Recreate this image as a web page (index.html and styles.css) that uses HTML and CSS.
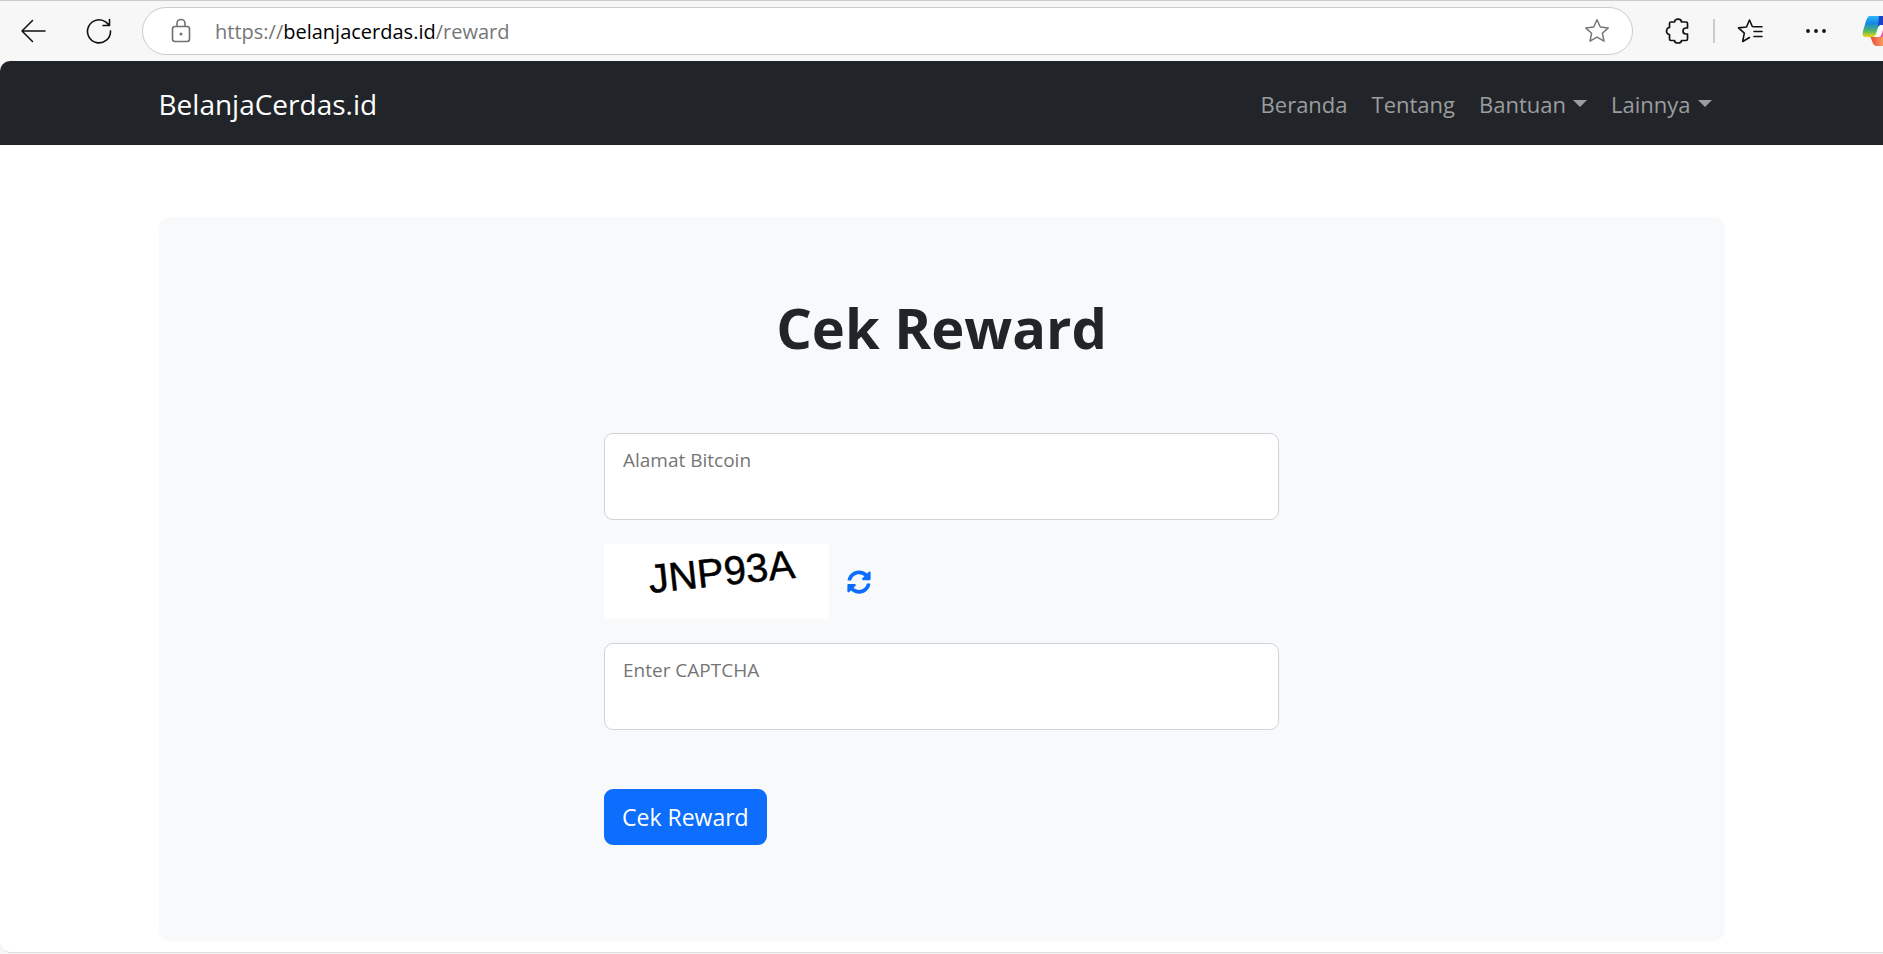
FILE: index.html
```html
<!DOCTYPE html>
<html lang="id">
<head>
    <meta charset="UTF-8">
    <meta name="viewport" content="width=device-width, initial-scale=1.0">
    <title>Cek Reward</title>
    <link rel="stylesheet" href="styles.css">
</head>
<body>
    <!-- Toolbar browser -->
    <div class="toolbar">
        <button class="tool-button" aria-label="Kembali">
            <svg width="26" height="26" viewBox="0 0 26 26" fill="none" stroke="#111" stroke-width="1.5" stroke-linecap="round" stroke-linejoin="round"><path d="M25 13H2M12.500 2.500L2 13l10.500 10.500"/></svg>
        </button>
        <button class="tool-button reload" aria-label="Muat ulang">
            <svg width="26" height="26" viewBox="0 0 26 26" fill="none" stroke="#111" stroke-width="1.600" stroke-linecap="round" stroke-linejoin="round"><path d="M24.500 13A11.500 11.500 0 1 1 20 4.200L23.500 7.500M23.500 1.500v6h-6.500"/></svg>
        </button>
        <div class="address-bar">
            <svg width="20" height="26" viewBox="0 0 20 26" fill="none" stroke="#707070" stroke-width="1.600"><rect x="1.500" y="8.500" width="17" height="15" rx="2.500"/><path d="M6 8.500V5.500a4 4 0 0 1 8 0v3"/><circle cx="10" cy="16" r="1.500" fill="#707070" stroke="none"/></svg>
            <div class="url">https://<span class="url-host">belanjacerdas.id</span>/reward</div>
            <button class="tool-button" aria-label="Favorit">
                <svg width="26" height="26" viewBox="0 0 26 26" fill="none" stroke="#767676" stroke-width="1.500" stroke-linejoin="round"><path d="M13 1.800L16.300 9l8 .900-5.900 5.400 1.600 7.900-7-4-7 4 1.600-7.900L1.700 9.900l8-.900z"/></svg>
            </button>
        </div>
        <button class="tool-button" aria-label="Ekstensi">
            <svg width="26" height="26" viewBox="0 0 26 26" fill="none" stroke="#111" stroke-width="1.700" stroke-linejoin="round"><path d="M6 4H9.500a3.500 2.800 0 0 1 7 0H21a1.500 1.500 0 0 1 1.500 1.500V10H21a3 3 0 0 0 0 6h1.500v5a1.500 1.500 0 0 1-1.500 1.500h-4.500a3.500 2.500 0 0 1-7 0H6a1.500 1.500 0 0 1-1.500-1.500V16.500a3 3.500 0 0 1 0-7V5.500A1.500 1.500 0 0 1 6 4z"/></svg>
        </button>
        <span class="divider"></span>
        <button class="tool-button" aria-label="Daftar favorit">
            <svg width="26" height="26" viewBox="0 0 26 26" fill="none" stroke="#111" stroke-width="1.600" stroke-linecap="round" stroke-linejoin="round"><path d="M17 8.700l-1.700-.2L12.500 2 9.500 9l-8 .900 5.800 5.200L5.700 23.500l6.800-4M17 8.700h8M17 13.500h8M17 18.500h8"/></svg>
        </button>
        <button class="tool-button menu" aria-label="Lainnya">
            <svg width="26" height="26" viewBox="0 0 26 26" fill="#111"><circle cx="5" cy="13" r="1.900"/><circle cx="13" cy="13" r="1.900"/><circle cx="21" cy="13" r="1.900"/></svg>
        </button>
        <button class="tool-button copilot" aria-label="Copilot">
            <svg width="21" height="32" viewBox="0 0 21 32">
                <defs>
                    <linearGradient id="wing" x1="0" y1="0" x2="0" y2="1"><stop offset="0" stop-color="#2bb8f5"/><stop offset=".35" stop-color="#1587e8"/><stop offset=".7" stop-color="#4fb76a"/><stop offset="1" stop-color="#f3d60c"/></linearGradient>
                    <linearGradient id="tail" x1="0" y1="0" x2="1" y2="0"><stop offset="0" stop-color="#e8483c"/><stop offset="1" stop-color="#fb9a5c"/></linearGradient>
                </defs>
                <path d="M8 22h13v9h-6c-3 0-4-2-5-5-.5-2-1-3-2-4z" fill="url(#tail)"/>
                <path d="M8 1h13v9h-2c-2 0-3 2-4 6-1 4-2 6-5 6H4c-3 0-4-2-3-6l3-10c1-3 2-5 4-5z" fill="url(#wing)"/>
                <path d="M17 1h4v9h-2c-1 0-2 1-3 2z" fill="#1a43c8"/>
                <path d="M21 10h-2c-2 0-3 2-4 6s-2 6-4 6h5c2 0 3-2 4-5l1-3z" fill="#fff"/>
                <path d="M21 15l-1 3c-1 3-2 4-3 4h4z" fill="#ee5a9a"/>
            </svg>
        </button>
    </div>

    <div class="page">
        <nav class="navbar">
            <div class="container navbar-inner">
                <a class="brand" href="#">BelanjaCerdas.id</a>
                <div class="nav-links">
                    <a class="nav-link" href="#">Beranda</a>
                    <a class="nav-link" href="#">Tentang</a>
                    <a class="nav-link dropdown" href="#">Bantuan</a>
                    <a class="nav-link dropdown" href="#">Lainnya</a>
                </div>
            </div>
        </nav>

        <main class="container">
            <div class="card">
                <h1>Cek Reward</h1>
                <form class="reward-form">
                    <textarea class="form-control" aria-label="Alamat Bitcoin" placeholder="Alamat Bitcoin"></textarea>
                    <div class="captcha-row">
                        <svg class="captcha" width="225" height="75" viewBox="0 0 225 75">
                            <text x="46" y="49" transform="rotate(-6 46 49)">JNP93A</text>
                        </svg>
                        <button type="button" class="refresh" aria-label="Muat ulang captcha">
                            <svg width="24" height="24" viewBox="0 0 512 512" fill="currentColor"><path d="M370.720 133.280C339.458 104.008 298.888 87.962 255.848 88c-77.458.068-144.328 53.178-162.791 126.850-1.344 5.363-6.122 9.150-11.651 9.150H24.103c-7.498 0-13.194-6.807-11.807-14.176C33.933 94.924 134.813 8 256 8c66.448 0 126.791 26.136 171.315 68.685L463.030 40.970C478.149 25.851 504 36.559 504 57.941V192c0 13.255-10.745 24-24 24H345.941c-21.382 0-32.090-25.851-16.971-40.971l41.750-41.749zM32 296h134.059c21.382 0 32.090 25.851 16.971 40.971l-41.750 41.750c31.262 29.273 71.835 45.319 114.876 45.280 77.418-.070 144.315-53.144 162.787-126.849 1.344-5.363 6.122-9.150 11.651-9.150h57.304c7.498 0 13.194 6.807 11.807 14.176C478.067 417.076 377.187 504 256 504c-66.448 0-126.791-26.136-171.315-68.685L48.970 471.030C33.851 486.149 8 475.441 8 454.059V320c0-13.255 10.745-24 24-24z"/></svg>
                        </button>
                    </div>
                    <textarea class="form-control" aria-label="Enter CAPTCHA" placeholder="Enter CAPTCHA"></textarea>
                    <button type="submit" class="btn-primary">Cek Reward</button>
                </form>
            </div>
        </main>
    </div>
</body>
</html>
```

FILE: styles.css
```css
* {
    box-sizing: border-box;
}
body {
    margin: 0;
    min-height: 100vh;
    display: flex;
    flex-direction: column;
    font-family: "Segoe UI", "Open Sans", "Noto Sans", sans-serif;
    background-color: #f7f7f7;
    color: #212529;
}
button {
    font-family: inherit;
    border: none;
    cursor: pointer;
}
svg {
    display: block;
}

/* Toolbar */
.toolbar {
    display: flex;
    align-items: center;
    height: 61px;
    padding-left: 20px;
    border-top: 1px solid #ccc;
}
.tool-button {
    flex: none;
    padding: 0;
    background: none;
    margin-right: 40px;
}
.tool-button.reload {
    margin-right: 30px;
}
.tool-button.menu {
    margin-right: 33px;
}
.address-bar {
    flex: 1;
    display: flex;
    align-items: center;
    height: 48px;
    margin-right: 32px;
    padding: 0 22px 0 28px;
    background: white;
    border: 1px solid #ccc;
    border-radius: 24px;
}
.address-bar .tool-button {
    margin: 0;
}
.url {
    flex: 1;
    margin-left: 24px;
    font-size: 20px;
    color: #767676;
}
.url-host {
    color: black;
}
.divider {
    width: 2px;
    height: 24px;
    margin: 0 22px 0 -18px;
    background: #ccc;
}
.tool-button.copilot {
    margin: 0;
}

/* Halaman */
.page {
    flex: 1;
    margin-bottom: 1px;
    background: white;
    border-bottom: 1px solid #ddd;
    border-radius: 10px 0 0 10px;
    overflow: hidden;
}
.container {
    width: 84%;
    max-width: 1566px;
    margin: 0 auto;
}
.navbar {
    background: #212529;
}
.navbar-inner {
    display: flex;
    align-items: center;
    justify-content: space-between;
    height: 84px;
    padding-top: 2px;
}
.brand {
    color: white;
    font-size: 28px;
    text-decoration: none;
}
.nav-links {
    display: flex;
    gap: 24px;
    padding-right: 13px;
}
.nav-link {
    color: #9b9d9e;
    font-size: 22px;
    text-decoration: none;
}
.dropdown::after {
    content: "";
    display: inline-block;
    margin-left: 7px;
    vertical-align: 6px;
    border-top: 7px solid;
    border-left: 7px solid transparent;
    border-right: 7px solid transparent;
}
.card {
    margin-top: 72px;
    padding: 72px 48px 96px;
    background: #f8f9fa;
    border-radius: 12px;
}
h1 {
    margin: 0 0 68px;
    font-size: 56px;
    line-height: 76px;
    font-weight: 700;
    text-align: center;
}
.reward-form {
    display: flex;
    flex-direction: column;
    gap: 24px;
    max-width: 675px;
    margin: 0 auto;
}
.form-control {
    display: block;
    width: 100%;
    height: 87px;
    padding: 11px 18px;
    font-family: inherit;
    font-size: 19px;
    line-height: 30px;
    border: 1px solid #ced4da;
    border-radius: 9px;
    outline: none;
    resize: none;
}
.form-control::placeholder {
    color: #757575;
}
.captcha-row {
    display: flex;
    align-items: center;
    gap: 18px;
}
.captcha {
    background: white;
    font-family: "Liberation Sans", Arial, sans-serif;
    font-size: 40px;
    stroke: black;
    stroke-width: 0.5px;
    overflow: visible;
}
.refresh {
    padding: 0;
    background: none;
    color: #0d6efd;
}
.btn-primary {
    align-self: flex-start;
    height: 56px;
    margin-top: 35px;
    padding: 0 18px;
    background: #0d6efd;
    color: white;
    font-size: 23px;
    border-radius: 9px;
}
```
